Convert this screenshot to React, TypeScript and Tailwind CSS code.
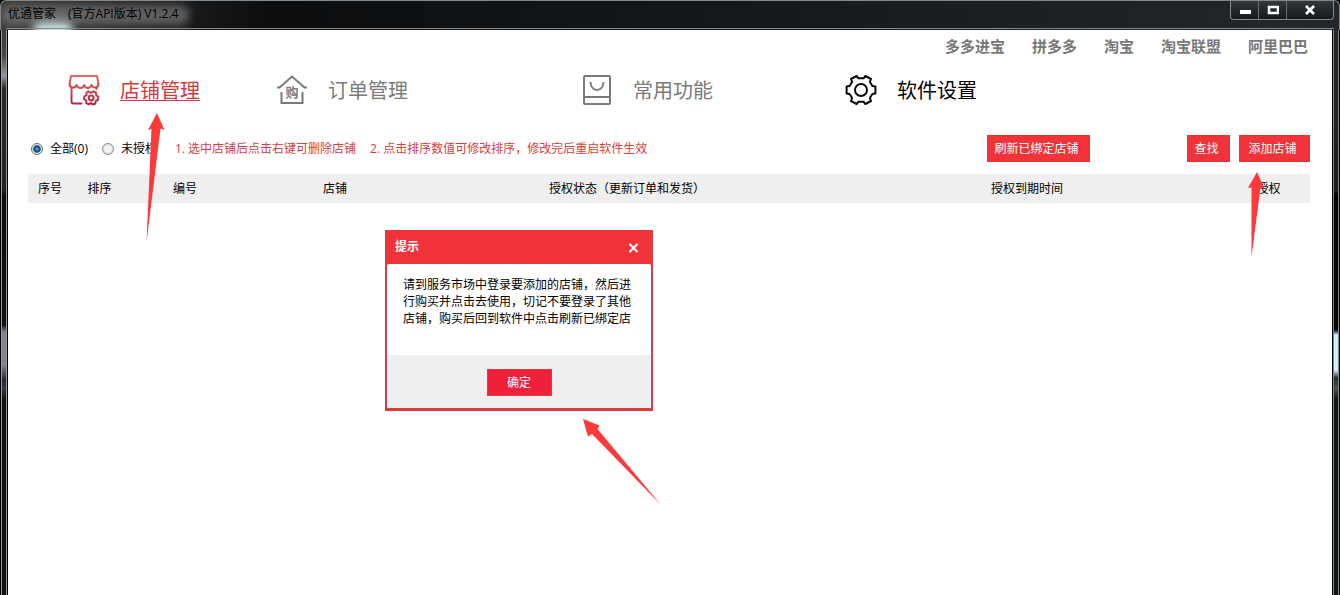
import React, { useState } from 'react';

const topLinks = ['多多进宝', '拼多多', '淘宝', '淘宝联盟', '阿里巴巴'];

const columns = [
  { label: '序号', className: 'w-[44px]' },
  { label: '排序', className: 'w-[55px]' },
  { label: '编号', className: 'w-[116px]' },
  { label: '店铺', className: 'w-[184px]' },
  { label: '授权状态（更新订单和发货）', className: '' },
  { label: '授权到期时间', className: '' },
  { label: '授权', className: 'w-[83px]' },
];

function ShopIcon() {
  return (
    <svg width="32" height="32" viewBox="0 0 32 32" fill="none" stroke="url(#shop)" strokeWidth="2" strokeLinejoin="round" strokeLinecap="round">
      <defs>
        <linearGradient id="shop" x1="0" y1="0" x2="0" y2="32" gradientUnits="userSpaceOnUse">
          <stop offset="0" stopColor="#e8685e" />
          <stop offset="1" stopColor="#b4203c" />
        </linearGradient>
      </defs>
      <path d="M3 2H29L30.500 10C30.500 14 25 15 23.500 11C22 15 17.500 15 16.200 11C15 15 10 15 8.700 11C7 15 1.500 14 1.500 10Z" />
      <path d="M3.500 14V27.500Q3.500 29.500 5.500 29.500H13.500" />
      <path d="M28.500 14V15" />
      <path d="M20.500 17.300L23 18.800L25.500 17.300L28 18.500L28.200 21.200L30.500 23L29.800 26L27.800 27L27.200 29.800L24.800 30.500L23 29L20.500 30.300L18.300 29L18.200 26.500L16 25L16.300 22.300L18.500 21.200L18.500 18.500Z" />
      <circle cx="23.200" cy="24" r="2.400" />
    </svg>
  );
}

function OrderIcon() {
  return (
    <svg width="32" height="32" viewBox="0 0 32 32" fill="none" stroke="#7a7a7a" strokeWidth="2">
      <path d="M1 13.500H3.500L16 2.500L28.500 13.500H31" />
      <path d="M5.500 18V29H26.500V18" />
      <text x="16" y="23" textAnchor="middle" fontSize="13" fontWeight="bold" fill="#7a7a7a" stroke="none">购</text>
    </svg>
  );
}

function BagIcon() {
  return (
    <svg width="32" height="32" viewBox="0 0 32 32" fill="none" stroke="#7a7a7a" strokeWidth="2">
      <rect x="3" y="2" width="26" height="28" rx="1" />
      <path d="M3 23H29" />
      <path d="M9.500 8C10 18.500 22 18.500 22.500 8" />
    </svg>
  );
}

function GearIcon() {
  return (
    <svg width="32" height="32" viewBox="0 0 32 32" fill="none" stroke="#0a0a0a" strokeWidth="2" strokeLinejoin="round">
      <path d="M30.400 19.400L27.400 19.900L24.900 24L26 27L20.400 30L18.500 27.700H13.500L11.600 30L6 27L7.100 24L4.600 19.900L1.600 19.400V12.600L4.600 12.100L7.100 8L6 5L11.600 2L13.500 4.300H18.500L20.400 2L26 5L24.900 8L27.400 12.100L30.400 12.600Z" />
      <circle cx="16" cy="16" r="6" />
    </svg>
  );
}

const navItems = [
  { label: '店铺管理', Icon: ShopIcon, className: 'text-[#d23a3e] underline decoration-1 underline-offset-2' },
  { label: '订单管理', Icon: OrderIcon, className: 'text-[#7a7a7a]' },
  { label: '常用功能', Icon: BagIcon, className: 'text-[#7a7a7a]' },
  { label: '软件设置', Icon: GearIcon, className: 'text-black' },
];

function TitleBar() {
  return (
    <header className="relative flex h-[30px] items-start justify-between overflow-hidden rounded-t-md border-x border-t border-[#85888a] bg-linear-to-r from-[#3a3a3b] via-[#0b0d0f] via-20% to-[#24282a] pl-[7px]">
      <div className="absolute top-[18px] left-8 h-5 w-10 rounded-full bg-[#d5f2f0] blur-xs" />
      <div className="absolute top-1 left-0 h-5 w-[188px] rounded-lg bg-[#7b7b7b]/70 blur-xs" />
      <h1 className="relative flex gap-3 pt-[5px] text-xs text-black">
        <span>优通管家</span>
        <span>(官方API版本) V1.2.4</span>
      </h1>
      <div className="relative mr-[5px] flex h-[19px] rounded-b border-x border-b border-[#85888a] bg-linear-to-b from-[#34383a] to-[#15191b]">
        <button aria-label="最小化" className="flex w-7 items-center justify-center border-r border-[#6d7072] pt-1">
          <svg width="12" height="6" viewBox="0 0 12 6"><rect x="1" y="1" width="11" height="4" fill="#fff" /></svg>
        </button>
        <button aria-label="最大化" className="flex w-7 items-center justify-center border-r border-[#6d7072]">
          <svg width="12" height="10" viewBox="0 0 12 10"><rect x="2" y="2" width="9" height="6" fill="none" stroke="#fff" strokeWidth="2.500" /></svg>
        </button>
        <button aria-label="关闭" className="flex w-[46px] items-center justify-center">
          <svg width="12" height="10" viewBox="0 0 12 10"><path d="M2 1L10 9M10 1L2 9" stroke="#fff" strokeWidth="2.500" /></svg>
        </button>
      </div>
      <div className="absolute inset-x-[5px] bottom-px h-px bg-[#85888a]" />
    </header>
  );
}

function RadioOption({ label, checked, onChange }: { label: string; checked: boolean; onChange: () => void }) {
  return (
    <label className="flex items-center gap-[7px]">
      <input
        type="radio"
        name="shop-filter"
        checked={checked}
        onChange={onChange}
        className="size-3 appearance-none rounded-full border border-[#8e8f8f] bg-radial from-[#f4f4f4] from-40% to-[#c5c9cd] checked:border-[#5d6f7c] checked:from-[#2aa5d8] checked:from-10% checked:via-[#123c5c] checked:via-45% checked:to-[#e4eaee] checked:to-60%"
      />
      {label}
    </label>
  );
}

function Dialog({ onClose }: { onClose: () => void }) {
  return (
    <div role="dialog" aria-labelledby="dialog-title" className="absolute top-[230px] left-[385px] w-[268px] border-x-2 border-b-3 border-[#dc3d42] bg-[#ef3338]">
      <div className="flex h-[34px] items-center justify-between pr-3 pl-2 text-white">
        <h2 id="dialog-title" className="text-xs font-bold">提示</h2>
        <button aria-label="关闭" onClick={onClose}>
          <svg width="11" height="11" viewBox="0 0 11 11"><path d="M1.500 2L9.500 10M9.500 2L1.500 10" stroke="#fff" strokeWidth="2" /></svg>
        </button>
      </div>
      <p className="h-[91px] rounded-t-xs bg-white pt-3 pr-5 pl-4 text-xs leading-[17px] text-black">
        请到服务市场中登录要添加的店铺，然后进行购买并点击去使用，切记不要登录了其他店铺，购买后回到软件中点击刷新已绑定店
      </p>
      <div className="flex h-[53px] items-end justify-center bg-[#efefef] pb-3">
        <button onClick={onClose} className="h-[27px] w-[65px] border border-[#dc3d42] bg-[#f01f3a] text-xs text-white">确定</button>
      </div>
    </div>
  );
}

export default function App() {
  const [filter, setFilter] = useState('all');
  const [open, setOpen] = useState(true);

  return (
    <div className="relative flex min-h-screen flex-col bg-black font-['Open_Sans','Noto_Sans_CJK_SC',sans-serif] text-xs text-black">
      <TitleBar />

      <div className="flex flex-1">
        <div className="flex w-2 pr-px pl-px">
          <div className="flex-1 border-x border-[#9a9a9c] bg-[linear-gradient(to_bottom,#3a3a3b_0px,#4d4644_26px,#8f9aa6_46px,#29292b_58px,#222_160px,#0c0b0d_165px,#131214_295px,#80828f_302px,#80828f_335px,#222830_350px,#303a45_358px,#111_370px)]" />
        </div>

        <main className="min-w-0 flex-1 bg-white">
          <nav className="flex h-8 items-center justify-end gap-[27px] pr-6 text-[15px] font-bold text-[#777]">
            {topLinks.map((link) => (
              <a key={link} href="#">{link}</a>
            ))}
          </nav>

          <nav className="grid h-14 grid-cols-[208px_305px_264px_auto] items-center pl-[60px]">
            {navItems.map(({ label, Icon, className }) => (
              <a key={label} href="#" className="flex items-center gap-5 text-xl">
                <Icon />
                <span className={`pt-0.5 ${className}`}>{label}</span>
              </a>
            ))}
          </nav>

          <div className="mt-[17px] flex h-[27px] items-center pr-[22px] pl-[23px]">
            <div className="flex gap-[14px]">
              <RadioOption label="全部(0)" checked={filter === 'all'} onChange={() => setFilter('all')} />
              <RadioOption label="未授权" checked={filter === 'none'} onChange={() => setFilter('none')} />
            </div>
            <p className="ml-[18px] flex gap-[14px] text-[#d64040]">
              <span>1. 选中店铺后点击右键可删除店铺</span>
              <span>2. 点击排序数值可修改排序，修改完后重启软件生效</span>
            </p>
            <div className="ml-auto flex text-white">
              <button className="mr-[97px] h-[27px] w-[103px] bg-[#ef3338] pr-1">刷新已绑定店铺</button>
              <button className="mr-[9px] h-[27px] w-[43px] bg-[#ef3338] pr-1">查找</button>
              <button onClick={() => setOpen(true)} className="h-[27px] w-[71px] bg-[#ef3338] pr-1">添加店铺</button>
            </div>
          </div>

          <div className="mt-3 pr-[22px] pl-5">
            <table className="w-full table-fixed bg-[#efefef]">
              <thead>
                <tr className="h-[29px]">
                  {columns.map((col) => (
                    <th key={col.label} className={`p-0 text-center font-normal ${col.className}`}>{col.label}</th>
                  ))}
                </tr>
              </thead>
            </table>
          </div>
        </main>

        <div className="flex w-2 pr-px pl-px">
          <div className="flex-1 border-x border-[#85888a] bg-[linear-gradient(to_bottom,#24282a_0px,#1a1d1f_160px,#000508_165px,#000508_300px,#d5eeff_305px,#d5eeff_340px,#222a2e_348px,#4a5257_358px,#0c1417_370px)]" />
        </div>
      </div>

      {open && <Dialog onClose={() => setOpen(false)} />}

      {/* guide arrows */}
      <svg className="pointer-events-none absolute top-[113px] left-[145px]" width="20" height="130" viewBox="0 0 20 130">
        <path d="M12 0L19.500 17L15.500 15.500L1.500 129.500L6.500 16L3 17Z" fill="#fb3a3a" />
      </svg>
      <svg className="pointer-events-none absolute top-[172px] left-[1247px]" width="20" height="86" viewBox="0 0 20 86">
        <path d="M10 0L17.500 16.500L13.500 15.500L4.500 85L4.500 15.500L1 16Z" fill="#fb3a3a" />
      </svg>
      <svg className="pointer-events-none absolute top-[419px] left-[583px]" width="80" height="88" viewBox="0 0 80 88">
        <path d="M0 0L16.500 6.500L14.500 10L78 86L9 15L5 17.500Z" fill="#fb3a3a" />
      </svg>
    </div>
  );
}
